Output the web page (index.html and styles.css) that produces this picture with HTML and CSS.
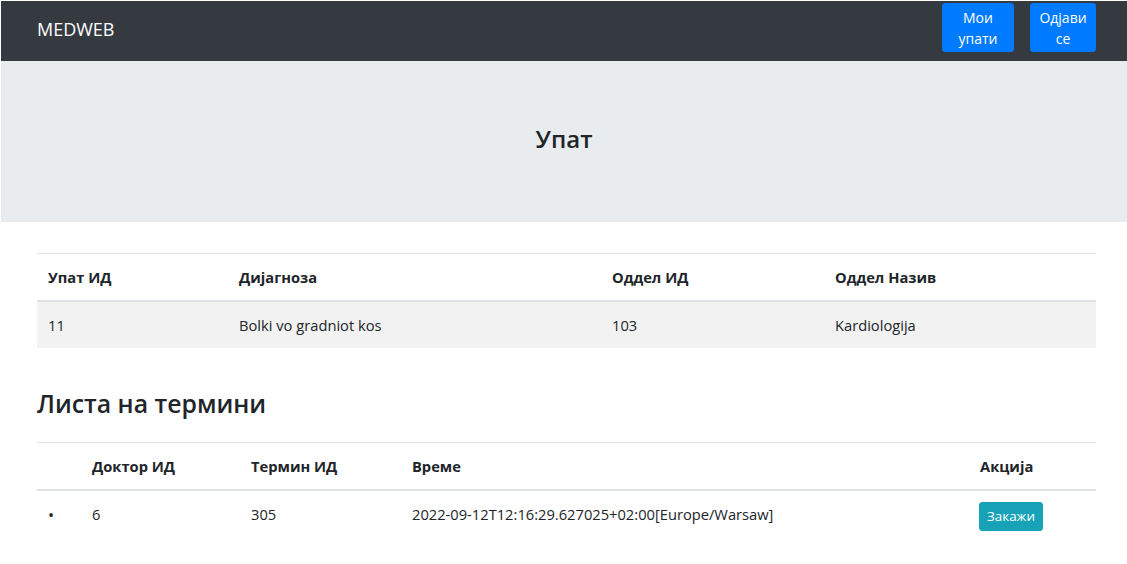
FILE: index.html
```html
<!DOCTYPE html>
<html lang="mk">
<head>
  <meta charset="UTF-8">
  <title>MEDWEB - Упат</title>
  <link rel="stylesheet" href="styles.css">
</head>
<body>
  <!-- навигација -->
  <nav class="navbar">
    <a class="brand" href="#">MEDWEB</a>
    <div class="nav-actions">
      <a class="btn btn-primary btn-nav btn-upati" href="#">Мои упати</a>
      <a class="btn btn-primary btn-nav btn-odjavi" href="#">Одјави се</a>
    </div>
  </nav>

  <div class="jumbotron">
    <h1 class="page-title">Упат</h1>
  </div>

  <main class="container">
    <!-- податоци за упатот -->
    <table class="table table-striped table-upat">
      <thead>
        <tr>
          <th class="c-id">Упат ИД</th>
          <th class="c-diag">Дијагноза</th>
          <th class="c-oddel">Оддел ИД</th>
          <th>Оддел Назив</th>
        </tr>
      </thead>
      <tbody>
        <tr>
          <td>11</td>
          <td>Bolki vo gradniot kos</td>
          <td>103</td>
          <td>Kardiologija</td>
        </tr>
      </tbody>
    </table>

    <h2 class="section-title">Листа на термини</h2>

    <table class="table table-termini">
      <thead>
        <tr>
          <th class="c-bullet"></th>
          <th class="c-doktor">Доктор ИД</th>
          <th class="c-termin">Термин ИД</th>
          <th>Време</th>
          <th class="c-akcija">Акција</th>
        </tr>
      </thead>
      <tbody>
        <tr>
          <td class="bullet">•</td>
          <td>6</td>
          <td>305</td>
          <td>2022-09-12T12:16:29.627025+02:00[Europe/Warsaw]</td>
          <td><button class="btn btn-info btn-sm" type="button">Закажи</button></td>
        </tr>
      </tbody>
    </table>
  </main>
</body>
</html>
```

FILE: styles.css
```css
* {
  margin: 0;
  padding: 0;
  box-sizing: border-box;
}

body {
  padding: 1px 0 0 1px;
  background: #fff;
  color: #212529;
  font-family: "Open Sans", "Noto Sans", sans-serif;
  font-size: 14.7px;
  line-height: 1.5;
}

a {
  text-decoration: none;
}

.navbar {
  height: 60px;
  background: #343a40;
  display: flex;
  align-items: flex-start;
  justify-content: space-between;
  padding: 0 31px 0 36px;
}

.brand {
  color: #fff;
  font-size: 18px;
  line-height: 57px;
}

.nav-actions {
  display: flex;
  gap: 16px;
  padding-top: 2px;
}

.btn {
  display: inline-block;
  border: 1px solid transparent;
  border-radius: 3px;
  text-align: center;
  font-family: inherit;
  cursor: pointer;
}

.btn-primary {
  background: #007bff;
  border-color: #007bff;
  color: #fff;
}

.btn-nav {
  height: 49px;
  font-size: 14px;
  line-height: 21px;
  padding: 3px 8px;
}

.btn-upati {
  width: 72px;
}

.btn-odjavi {
  width: 66px;
}

.btn-info {
  background: #17a2b8;
  border-color: #17a2b8;
  color: #fff;
}

.btn-sm {
  font-size: 13.4px;
  line-height: 19px;
  padding: 4px 7px;
  height: 29px;
}

.jumbotron {
  background: #e9ecef;
  height: 161px;
  display: flex;
  align-items: center;
  justify-content: center;
}

.page-title {
  font-size: 24px;
  font-weight: 600;
  line-height: 1.2;
  padding-bottom: 4px;
}

.container {
  padding: 31px 31px 0 36px;
}

.table {
  width: 100%;
  border-collapse: collapse;
  table-layout: fixed;
}

.table th,
.table td {
  text-align: left;
  padding: 12px 11px;
  border-top: 1px solid #dee2e6;
  vertical-align: top;
}

.table th {
  font-weight: 700;
}

.table thead th {
  border-bottom: 2px solid #dee2e6;
  vertical-align: bottom;
}

.table-striped tbody tr:nth-of-type(odd) {
  background: #f2f2f2;
}

.table-upat tbody td {
  border-top: none;
}

.c-id { width: 191px; }
.c-diag { width: 373px; }
.c-oddel { width: 223px; }

.section-title {
  font-size: 24.8px;
  font-weight: 600;
  line-height: 1.2;
  margin: 41px 0 23px;
}

.table-termini tbody td {
  border-top: none;
}

.table-termini tbody td:last-child {
  padding-top: 11px;
}

.c-bullet { width: 44px; }
.c-doktor { width: 159px; }
.c-termin { width: 161px; }
.c-akcija { width: 127px; }

.bullet {
  padding-left: 11px;
  font-size: 16px;
}

.table-termini .btn-sm {
  margin-left: -1px;
}
```
